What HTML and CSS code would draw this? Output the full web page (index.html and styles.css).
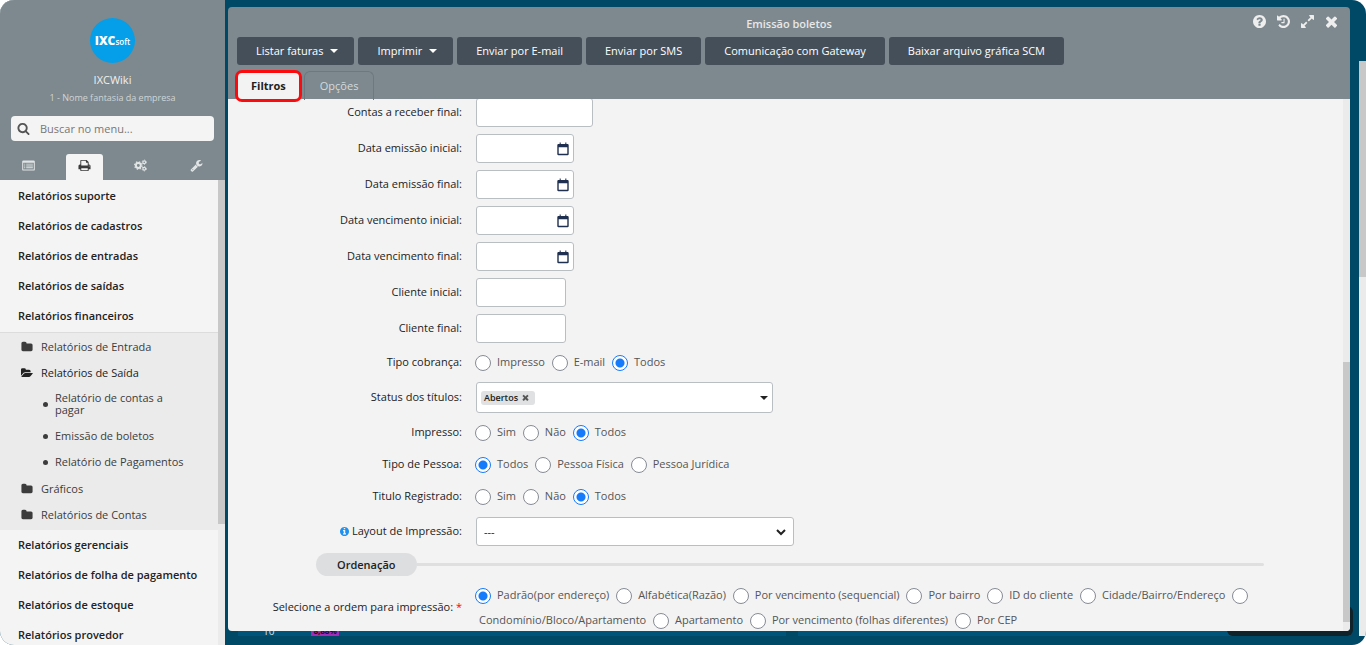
FILE: index.html
```html
<!DOCTYPE html>
<html lang="pt-BR">
<head>
<meta charset="utf-8">
<title>Emissão boletos</title>
<link rel="stylesheet" href="styles.css">
</head>
<body>
<svg class="sprite" aria-hidden="true">
  <symbol id="i-search" viewBox="0 0 1792 1792"><path d="M1216 832q0-185-131.500-316.500t-316.500-131.500-316.500 131.500-131.500 316.500 131.500 316.500 316.500 131.500 316.500-131.500 131.500-316.500zm512 832q0 52-38 90t-90 38q-54 0-90-38l-343-342q-179 124-399 124-143 0-273.500-55.500t-225-150-150-225-55.500-273.500 55.500-273.500 150-225 225-150 273.500-55.500 273.500 55.500 225 150 150 225 55.500 273.500q0 220-124 399l343 343q37 37 37 90z"/></symbol>
  <symbol id="i-folder" viewBox="0 0 1792 1792"><path d="M1728 608v704q0 92-66 158t-158 66h-1216q-92 0-158-66t-66-158v-960q0-92 66-158t158-66h320q92 0 158 66t66 158v32h672q92 0 158 66t66 158z"/></symbol>
  <symbol id="i-open" viewBox="0 0 1920 1792"><path d="M1879 952q0 31-31 66l-336 396q-43 51-120.500 86.500t-143.500 35.500h-1088q-34 0-60.500-13t-26.500-43q0-31 31-66l336-396q43-51 120.500-86.500t143.500-35.500h1088q34 0 60.500 13t26.500 43zm-343-344v160h-832q-94 0-197 47.500t-164 119.500l-337 396-5 6q0-4-.5-12.500t-.5-12.500v-960q0-92 66-158t158-66h320q92 0 158 66t66 158v32h544q92 0 158 66t66 158z"/></symbol>
  <symbol id="i-times" viewBox="200 200 1392 1392"><path d="M1490 1322q0 40-28 68l-136 136q-28 28-68 28t-68-28l-294-294-294 294q-28 28-68 28t-68-28l-136-136q-28-28-28-68t28-68l294-294-294-294q-28-28-28-68t28-68l136-136q28-28 68-28t68 28l294 294 294-294q28-28 68-28t68 28l136 136q28 28 28 68t-28 68l-294 294 294 294q28 28 28 68z"/></symbol>
  <symbol id="i-help" viewBox="128 128 1536 1536"><path d="M1024 1376v-192q0-14-9-23t-23-9h-192q-14 0-23 9t-9 23v192q0 14 9 23t23 9h192q14 0 23-9t9-23zm256-672q0-88-55.500-163t-138.500-116-170-41q-243 0-371 213-15 24 8 42l132 100q7 6 19 6 16 0 25-12 53-68 86-92 34-24 86-24 48 0 85.500 26t37.500 59q0 38-20 61t-68 45q-63 28-115.500 86.500t-52.500 125.500v36q0 14 9 23t23 9h192q14 0 23-9t9-23q0-19 21.500-49.500t54.500-49.500q32-18 49-28.500t46-35 44.500-48 28-60.500 12.500-81zm384 192q0 209-103 385.500t-279.500 279.500-385.500 103-385.500-103-279.500-279.500-103-385.500 103-385.500 279.500-279.500 385.500-103 385.500 103 279.500 279.500 103 385.500z"/></symbol>
  <symbol id="i-info" viewBox="128 128 1536 1536"><path d="M1152 1376v-160q0-14-9-23t-23-9h-96v-512q0-14-9-23t-23-9h-320q-14 0-23 9t-9 23v160q0 14 9 23t23 9h96v320h-96q-14 0-23 9t-9 23v160q0 14 9 23t23 9h448q14 0 23-9t9-23zm-128-896v-160q0-14-9-23t-23-9h-192q-14 0-23 9t-9 23v160q0 14 9 23t23 9h192q14 0 23-9t9-23zm640 416q0 209-103 385.500t-279.500 279.500-385.500 103-385.500-103-279.500-279.500-103-385.500 103-385.500 279.500-279.500 385.500-103 385.500 103 279.500 279.500 103 385.500z"/></symbol>
  <symbol id="i-history" viewBox="128 128 1536 1536"><path d="M1664 896q0 156-61 298t-164 245-245 164-298 61q-172 0-327-72.500t-264-204.500q-7-10-6.500-22.500t8.500-20.500l137-138q10-9 25-9 16 2 23 12 73 95 179 147t225 52q104 0 198.500-40.500t163.500-109.500 109.500-163.500 40.500-198.500-40.500-198.500-109.500-163.500-163.500-109.500-198.500-40.500q-98 0-188 35.500t-160 101.500l137 138q31 30 14 69-17 40-59 40h-448q-26 0-45-19t-19-45v-448q0-42 40-59 39-17 69 14l130 129q107-101 244.500-156.500t284.500-55.500q156 0 298 61t245 164 164 245 61 298zm-640-288v448q0 14-9 23t-23 9h-320q-14 0-23-9t-9-23v-64q0-14 9-23t23-9h224v-352q0-14 9-23t23-9h64q14 0 23 9t9 23z"/></symbol>
  <symbol id="i-expand" viewBox="128 128 1536 1536"><path d="M883 1056q0 13-10 23l-332 332 144 144q19 19 19 45t-19 45-45 19h-448q-26 0-45-19t-19-45v-448q0-26 19-45t45-19 45 19l144 144 332-332q10-10 23-10t23 10l114 114q10 10 10 23zm781-864v448q0 26-19 45t-45 19-45-19l-144-144-332 332q-10 10-23 10t-23-10l-114-114q-10-10-10-23t10-23l332-332-144-144q-19-19-19-45t19-45 45-19h448q26 0 45 19t19 45z"/></symbol>
  <symbol id="i-print" viewBox="0 0 1792 1792"><path d="M448 1536h896v-256h-896v256zm0-640h896v-384h-160q-40 0-68-28t-28-68v-160h-640v640zm1152 64q0-26-19-45t-45-19-45 19-19 45 19 45 45 19 45-19 19-45zm128 0v416q0 13-9.500 22.500t-22.500 9.500h-224v160q0 40-28 68t-68 28h-960q-40 0-68-28t-28-68v-160h-224q-13 0-22.500-9.500t-9.500-22.500v-416q0-79 56.500-135.500t135.500-56.500h64v-544q0-40 28-68t68-28h672q40 0 88 20t76 48l152 152q28 28 48 76t20 88v256h64q79 0 135.500 56.500t56.500 135.500z"/></symbol>
  <symbol id="i-wrench" viewBox="0 0 1792 1792"><path d="M448 1472q0-26-19-45t-45-19-45 19-19 45 19 45 45 19 45-19 19-45zm644-420l-682 682q-37 37-90 37-52 0-91-37l-106-108q-38-36-38-90 0-53 38-91l681-681q39 98 114.500 173.500t173.500 114.500zm634-435q0 39-23 106-47 134-164.500 217.500t-258.500 83.500q-185 0-316.500-131.500t-131.500-316.500 131.500-316.500 316.500-131.500q58 0 121.500 16.500t107.500 46.500q16 11 16 28t-16 28l-293 169v224l193 107q5-3 79-48.500t135.500-81 70.500-35.500q15 0 23.500 10t8.500 25z"/></symbol>
  <symbol id="i-list" viewBox="0 0 14 14"><path fill-rule="evenodd" d="M1.500 1.500h11q1.300 0 1.300 1.300v8.400q0 1.300-1.300 1.300h-11q-1.300 0-1.300-1.300V2.800q0-1.300 1.300-1.300zM1.300 4v7.300h11.400V4zM2.300 5h1.200v1h-1.200zM4.500 5h7.200v1h-7.200zM2.300 7h1.200v1h-1.200zM4.500 7h7.200v1h-7.200zM2.300 9h1.200v1h-1.200zM4.500 9h7.200v1h-7.200z"/></symbol>
  <symbol id="i-cogs" viewBox="0 0 15 14"><g fill="none" stroke="currentColor"><circle cx="5" cy="7" r="2.800" stroke-width="2.200"/><circle cx="5" cy="7" r="4.300" stroke-width="1.400" stroke-dasharray="1.690 1.690"/><circle cx="11.800" cy="3.200" r="1.600" stroke-width="1.300"/><circle cx="11.800" cy="3.200" r="2.500" stroke-width="1" stroke-dasharray="1.310 1.310"/><circle cx="11.800" cy="10.800" r="1.600" stroke-width="1.300"/><circle cx="11.800" cy="10.800" r="2.500" stroke-width="1" stroke-dasharray="1.310 1.310"/></g></symbol>
  <symbol id="i-cal" viewBox="0 0 12 14"><path fill-rule="evenodd" d="M1.500 2h9q1.200 0 1.200 1.200v8.800q0 1.200-1.200 1.200h-9q-1.200 0-1.200-1.200V3.200Q.3 2 1.500 2zM1.700 5.300v6.500h8.600V5.300z"/><path opacity=".7" d="M2.500.5h1.500v2h-1.500zM8 .5h1.500v2H8z"/></symbol>
</svg>

<div class="app">
  <aside class="sidebar">
    <header class="profile">
      <div class="avatar"><b>IXC</b><span>soft</span></div>
      <div class="user">IXCWiki</div>
      <div class="company">1 - Nome fantasia da empresa</div>
      <label class="search"><svg class="icon"><use href="#i-search"/></svg><input type="text" placeholder="Buscar no menu..." aria-label="Buscar no menu"></label>
      <nav class="modes">
        <button aria-label="Cadastros"><svg class="icon"><use href="#i-list"/></svg></button>
        <button class="current" aria-label="Relatórios"><svg class="icon"><use href="#i-print"/></svg></button>
        <button aria-label="Configurações"><svg class="icon"><use href="#i-cogs"/></svg></button>
        <button aria-label="Ferramentas"><svg class="icon"><use href="#i-wrench"/></svg></button>
      </nav>
    </header>
    <div class="menu-area">
      <nav class="menu">
        <div class="group first">
          <a href="#">Relatórios suporte</a>
          <a href="#">Relatórios de cadastros</a>
          <a href="#">Relatórios de entradas</a>
          <a href="#">Relatórios de saídas</a>
          <a href="#">Relatórios financeiros</a>
        </div>
        <div class="tree">
          <a class="folder" href="#"><svg class="icon"><use href="#i-folder"/></svg>Relatórios de Entrada</a>
          <a class="folder open" href="#"><svg class="icon"><use href="#i-open"/></svg>Relatórios de Saída</a>
          <div class="leaves">
            <a href="#">Relatório de contas a pagar</a>
            <a href="#">Emissão de boletos</a>
            <a href="#">Relatório de Pagamentos</a>
          </div>
          <a class="folder" href="#"><svg class="icon"><use href="#i-folder"/></svg>Gráficos</a>
          <a class="folder" href="#"><svg class="icon"><use href="#i-folder"/></svg>Relatórios de Contas</a>
        </div>
        <div class="group">
          <a href="#">Relatórios gerenciais</a>
          <a href="#">Relatórios de folha de pagamento</a>
          <a href="#">Relatórios de estoque</a>
          <a href="#">Relatórios provedor</a>
        </div>
      </nav>
      <div class="bar bar-menu"><i></i></div>
    </div>
  </aside>

  <main class="desk">
    <div class="toast"></div>
    <section class="window">
      <header class="top">
        <h1>Emissão boletos</h1>
        <div class="tools">
          <button aria-label="Ajuda"><svg class="icon"><use href="#i-help"/></svg></button>
          <button aria-label="Histórico"><svg class="icon"><use href="#i-history"/></svg></button>
          <button aria-label="Expandir"><svg class="icon"><use href="#i-expand"/></svg></button>
          <button aria-label="Fechar"><svg class="icon"><use href="#i-times"/></svg></button>
        </div>
        <div class="actions">
          <button>Listar faturas<i class="caret"></i></button>
          <button>Imprimir<i class="caret"></i></button>
          <button>Enviar por E-mail</button>
          <button>Enviar por SMS</button>
          <button>Comunicação com Gateway</button>
          <button>Baixar arquivo gráfica SCM</button>
        </div>
        <div class="tabs">
          <button class="tab active">Filtros</button>
          <button class="tab">Opções</button>
        </div>
      </header>
      <div class="body">
        <form class="form">
          <div class="row"><label for="crf">Contas a receber final:</label><input class="field wide" id="crf" type="text"></div>
          <div class="row"><label for="dei">Data emissão inicial:</label><div class="field date"><input id="dei" type="text"><svg class="icon"><use href="#i-cal"/></svg></div></div>
          <div class="row"><label for="def">Data emissão final:</label><div class="field date"><input id="def" type="text"><svg class="icon"><use href="#i-cal"/></svg></div></div>
          <div class="row"><label for="dvi">Data vencimento inicial:</label><div class="field date"><input id="dvi" type="text"><svg class="icon"><use href="#i-cal"/></svg></div></div>
          <div class="row"><label for="dvf">Data vencimento final:</label><div class="field date"><input id="dvf" type="text"><svg class="icon"><use href="#i-cal"/></svg></div></div>
          <div class="row"><label for="cli">Cliente inicial:</label><input class="field short" id="cli" type="text"></div>
          <div class="row"><label for="clf">Cliente final:</label><input class="field short" id="clf" type="text"></div>
          <div class="row"><span class="name">Tipo cobrança:</span><div class="radios">
            <input type="radio" name="tc" id="tc1"><label for="tc1">Impresso</label>
            <input type="radio" name="tc" id="tc2"><label for="tc2">E-mail</label>
            <input type="radio" name="tc" id="tc3" checked><label for="tc3">Todos</label></div></div>
          <div class="row"><span class="name">Status dos títulos:</span><div class="multi"><span class="chip">Abertos<button type="button" aria-label="Remover Abertos"><svg class="icon"><use href="#i-times"/></svg></button></span><i class="caret"></i></div></div>
          <div class="row"><span class="name">Impresso:</span><div class="radios">
            <input type="radio" name="im" id="im1"><label for="im1">Sim</label>
            <input type="radio" name="im" id="im2"><label for="im2">Não</label>
            <input type="radio" name="im" id="im3" checked><label for="im3">Todos</label></div></div>
          <div class="row"><span class="name">Tipo de Pessoa:</span><div class="radios">
            <input type="radio" name="tp" id="tp1" checked><label for="tp1">Todos</label>
            <input type="radio" name="tp" id="tp2"><label for="tp2">Pessoa Física</label>
            <input type="radio" name="tp" id="tp3"><label for="tp3">Pessoa Jurídica</label></div></div>
          <div class="row"><span class="name">Titulo Registrado:</span><div class="radios">
            <input type="radio" name="tr" id="tr1"><label for="tr1">Sim</label>
            <input type="radio" name="tr" id="tr2"><label for="tr2">Não</label>
            <input type="radio" name="tr" id="tr3" checked><label for="tr3">Todos</label></div></div>
          <div class="row layout"><label for="lay"><svg class="icon info"><use href="#i-info"/></svg>Layout de Impressão:</label><div class="select"><select class="field" id="lay"><option>---</option></select><svg class="chevron" viewBox="0 0 10 8"><path d="M1 2l4 4 4-4"/></svg></div></div>
          <div class="section"><h2>Ordenação</h2><hr></div>
          <div class="row"><span class="name">Selecione a ordem para impressão: <em>*</em></span><div class="radios">
            <input type="radio" name="or" id="or1" checked><label for="or1">Padrão(por endereço)</label>
            <input type="radio" name="or" id="or2"><label for="or2">Alfabética(Razão)</label>
            <input type="radio" name="or" id="or3"><label for="or3">Por vencimento (sequencial)</label>
            <input type="radio" name="or" id="or4"><label for="or4">Por bairro</label>
            <input type="radio" name="or" id="or5"><label for="or5">ID do cliente</label>
            <input type="radio" name="or" id="or6"><label for="or6">Cidade/Bairro/Endereço</label>
            <input type="radio" name="or" id="or7"><wbr><label for="or7">Condomínio/Bloco/Apartamento</label>
            <input type="radio" name="or" id="or8"><label for="or8">Apartamento</label>
            <input type="radio" name="or" id="or9"><label for="or9">Por vencimento (folhas diferentes)</label>
            <input type="radio" name="or" id="or10"><label for="or10">Por CEP</label></div></div>
        </form>
        <div class="bar bar-body"><i></i></div>
      </div>
    </section>
    <div class="behind"><div class="chart"><span>10</span><b>8,88%</b></div><div class="chart"></div></div>
    <div class="bar bar-page"><i></i></div>
  </main>
</div>
</body>
</html>
```

FILE: styles.css
```css
* { box-sizing: border-box; }
body { margin: 0; background: #fff; font: 11px/16px "Open Sans", "Noto Sans", sans-serif; color: #222; }
button, input, select { font: inherit; color: inherit; }
button { border: 0; padding: 0; background: none; }
a { color: inherit; text-decoration: none; }
.sprite { display: none; }
.icon { width: 13px; height: 13px; fill: currentColor; flex: none; }

.app { display: flex; height: 100vh; border-radius: 14px; overflow: hidden; background: #004966; }

/* sidebar */
.sidebar { flex: 0 0 225px; display: flex; flex-direction: column; background: #f4f4f4; }
.profile { display: flex; flex-direction: column; align-items: center; background: #7d898e; padding-top: 18px; color: #f0f0f0; }
.avatar { width: 45px; height: 45px; border-radius: 50%; background: #049fe8; color: #fff; display: flex; align-items: baseline; justify-content: center; line-height: 45px; }
.avatar b { font-size: 12px; font-weight: 800; }
.avatar span { font-size: 8px; font-weight: 600; }
.user { margin-top: 8px; font-weight: 500; line-height: 18px; }
.company { font-size: 9px; line-height: 18px; color: #d0d5d7; }
.search { align-self: stretch; display: flex; align-items: center; gap: 10px; height: 25px; margin: 9px 11px 0; padding: 0 6px; border-radius: 4px; background: #f4f4f4; color: #555; }
.search input { flex: 1; min-width: 0; border: 0; padding: 0; background: none; outline: 0; }
.search input::placeholder { color: #777; opacity: 1; }
.modes { align-self: stretch; display: grid; grid-template-columns: repeat(4, 1fr); justify-items: center; margin-top: 13px; padding: 0 1px; }
.modes button { width: 37px; height: 26px; padding-bottom: 3px; display: grid; place-items: center; border-radius: 3px 3px 0 0; color: #e2e5e6; }
.modes .current { background: #f4f4f4; color: #3a3a3a; }
.menu-area { flex: 1; min-height: 0; display: flex; overflow: hidden; }
.menu { flex: 1; }
.group a { display: block; padding-left: 18px; line-height: 30px; font-weight: 600; white-space: nowrap; }
.first { padding-top: 1px; }
.tree { background: #ebebeb; border-top: 1px solid #dcdcdc; padding: 1px 0 2px; margin-top: 1px; color: #3c3c3c; }
.folder { display: flex; align-items: center; gap: 8px; height: 26px; padding-left: 21px; }
.folder .icon { width: 12px; height: 12px; }
.folder.open { color: #222; font-weight: 500; }
.leaves { display: grid; gap: 2px; padding: 0 32px 0 43px; margin-bottom: 2px; }
.leaves a { display: flex; align-items: center; gap: 7px; padding: 6px 0; line-height: 12px; }
.leaves a::before { content: ""; flex: none; width: 5px; height: 5px; border-radius: 50%; background: #3c3c3c; }
.bar { flex: 0 0 7px; background: #ebebeb; }
.bar i { display: block; background: #c8c8c8; }
.bar-menu i { height: 74%; }

/* work area */
.desk { position: relative; flex: 1; min-width: 0; display: flex; flex-direction: column; padding: 7px 16px 9px 3px; }
.window { position: relative; flex: 1; min-height: 0; display: flex; flex-direction: column; border-radius: 4px; }
.top { position: relative; z-index: 1; display: flex; flex-direction: column; background: #7d898e; border-radius: 4px 4px 0 0; padding: 0 9px; }
h1 { margin: 8px 0 0; font-size: 11px; line-height: 18px; font-weight: 600; text-align: center; color: #e8e8e8; }
.tools { position: absolute; top: 8px; right: 12px; display: flex; gap: 11px; color: #eee; }
.tools button { display: block; height: 13px; }
.actions { display: flex; gap: 4px; margin-top: 4px; }
.actions button { display: flex; align-items: center; height: 28px; padding: 0 19px; border-radius: 3px; background: #454f59; color: #fff; font-weight: 500; white-space: nowrap; }
.caret { border: 4px solid transparent; border-top-color: currentColor; border-bottom: 0; }
.actions .caret { margin: 0 -3px 0 7px; }
.tabs { display: flex; align-items: flex-start; gap: 2px; margin: 5px 0 -3px -2px; }
.tab { height: 29px; margin-top: 1px; padding: 0 15px; border: 1px solid #6c7980; border-bottom: 0; border-radius: 6px 6px 0 0; color: #d5dadc; }
.tab.active { height: 32px; margin-top: 0; padding: 0 13px; border: 3px solid #fb0a0e; border-radius: 7px; background: #f3f3f3; color: #222; font-weight: 700; }
.body { flex: 1; min-height: 0; display: flex; overflow: hidden; background: #f3f3f3; border-radius: 0 0 4px 4px; }
.form { flex: 1; min-width: 0; display: flex; flex-direction: column; gap: 7px; margin-top: -1px; padding-right: 79px; }
.row { display: grid; grid-template-columns: 234px 1fr; column-gap: 14px; align-items: center; flex: none; }
.row > label, .name { padding-bottom: 2px; text-align: right; white-space: nowrap; }
.name em { color: #f00; font-style: normal; }
.layout { padding-top: 1px; }
.info { width: 9px; height: 9px; margin-right: 3px; color: #1e90ef; vertical-align: -1px; }
.field { height: 29px; border: 1px solid #b9bec3; border-radius: 3px; background: #fff; outline: 0; }
.wide { width: 117px; }
.short { width: 90px; }
.date { width: 98px; display: flex; align-items: center; padding-right: 4px; color: #1f2f4f; }
.date input { flex: 1; min-width: 0; border: 0; background: none; outline: 0; }
.date .icon { width: 12px; height: 14px; }
.radios { line-height: 25px; margin: -1px 0 1px -3px; color: #555; }
.radios input { appearance: none; width: 16px; height: 16px; margin: 0 0 0 2px; border: 1px solid #868b95; border-radius: 50%; background: #fff; vertical-align: middle; }
.radios input:checked { border-color: #157bfb; background: radial-gradient(circle, #157bfb 4px, #fff 5px); }
.radios label { padding: 0 2px 0 6px; white-space: nowrap; }
.multi { width: 297px; height: 31px; display: flex; align-items: center; justify-content: space-between; padding: 0 4px; border: 1px solid #b9bec3; border-radius: 3px; background: #fff; }
.chip { display: flex; align-items: center; gap: 4px; height: 14px; padding: 0 6px 0 3px; border-radius: 3px; background: #dfe1e2; font-size: 9px; font-weight: 600; }
.chip button { display: flex; }
.chip .icon { width: 7px; height: 7px; color: #555; }
.select { display: grid; width: 318px; align-items: center; }
.select select, .chevron { grid-area: 1 / 1; }
.select select { appearance: none; width: 100%; padding: 0 7px; }
.chevron { justify-self: end; width: 10px; height: 8px; margin-right: 8px; fill: none; stroke: #222; stroke-width: 2; pointer-events: none; }
.section { display: flex; align-items: center; margin-left: 88px; flex: none; }
h2 { margin: 0; padding: 0 21px; border-radius: 12px; background: #dddedf; font-size: 11px; line-height: 23px; font-weight: 600; }
hr { flex: 1; margin: 0; border: 0; height: 3px; background: #dfdfdf; border-radius: 0 2px 2px 0; }
.bar-body i { margin-top: 263px; height: 260px; }

/* what shows round the window */
.behind { display: grid; grid-template-columns: 549fr 553fr; gap: 12px; height: 5px; overflow: hidden; padding-left: 10px; }
.chart { display: flex; gap: 37px; padding-left: 25px; background: #005379; color: #d6e3e8; font-size: 10px; line-height: 12px; height: 15px; margin-top: -6px; }
.chart b { align-self: flex-start; padding: 0 2px; background: #a52ab5; color: #111; font-size: 8px; }
.toast { position: absolute; right: 13px; bottom: 9px; width: 126px; height: 30px; border-radius: 6px; background: #10222a; }
.bar-page { position: absolute; top: 61px; right: 0; bottom: 9px; width: 7px; }
.bar-page i { height: 216px; }
```
